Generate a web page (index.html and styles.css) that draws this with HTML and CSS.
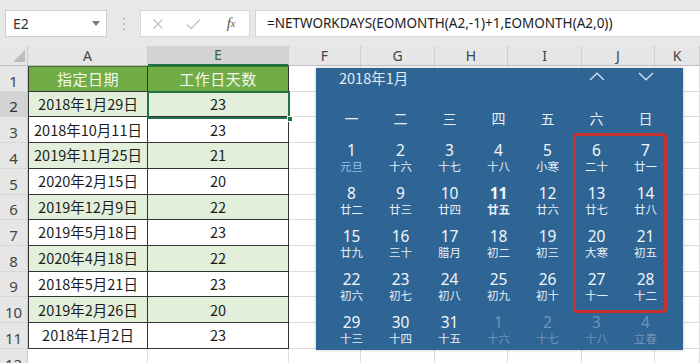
FILE: index.html
```html
<!DOCTYPE html>
<html lang="zh-CN">
<head>
<meta charset="utf-8">
<title>Excel NETWORKDAYS</title>
<link rel="stylesheet" href="styles.css">
</head>
<body>
<div class="toolbar">
  <div class="namebox">
    <span class="ref">E2</span>
    <svg class="dd" width="8" height="5" viewBox="0 0 8 5"><polygon points="0,0 8,0 4,5" fill="#7a7a7a"/></svg>
  </div>
  <div class="grip">
    <svg width="4" height="14" viewBox="0 0 4 14"><circle cx="2" cy="2" r="1.1" fill="#b5b5b5"/><circle cx="2" cy="7" r="1.1" fill="#b5b5b5"/><circle cx="2" cy="12" r="1.1" fill="#b5b5b5"/></svg>
  </div>
  <div class="fnbox">
    <span class="fb-btn"><svg width="12" height="12" viewBox="0 0 12 12"><path d="M1.5 1.5 L10.5 10.5 M10.5 1.5 L1.5 10.5" stroke="#c2c2c2" stroke-width="1.3" fill="none"/></svg></span>
    <span class="fb-btn"><svg width="15" height="12" viewBox="0 0 15 12"><path d="M1 6.5 L5.2 10.5 L14 1.5" stroke="#c2c2c2" stroke-width="1.3" fill="none"/></svg></span>
    <span class="fb-btn fx"><i>f</i><sub>x</sub></span>
  </div>
  <div class="formula">=NETWORKDAYS(EOMONTH(A2,-1)+1,EOMONTH(A2,0))</div>
</div>

<div class="sheet">
  <div class="row colhdr">
    <div class="corner"><svg width="12" height="12" viewBox="0 0 12 12"><polygon points="12,0 12,12 0,12" fill="#bdbdbd"/></svg></div>
    <div class="ch">A</div><div class="ch sel">E</div><div class="ch">F</div><div class="ch">G</div><div class="ch">H</div><div class="ch">I</div><div class="ch">J</div><div class="ch">K</div>
  </div>

  <div class="row"><div class="rh">1</div><div class="t th first">指定日期</div><div class="t th">工作日天数</div><div class="c"></div><div class="c"></div><div class="c"></div><div class="c"></div><div class="c"></div><div class="c"></div></div>
  <div class="row"><div class="rh sel">2</div><div class="t g first">2018年1月29日</div><div class="t g">23</div><div class="c"></div><div class="c"></div><div class="c"></div><div class="c"></div><div class="c"></div><div class="c"></div></div>
  <div class="row"><div class="rh">3</div><div class="t first">2018年10月11日</div><div class="t">23</div><div class="c"></div><div class="c"></div><div class="c"></div><div class="c"></div><div class="c"></div><div class="c"></div></div>
  <div class="row"><div class="rh">4</div><div class="t g first">2019年11月25日</div><div class="t g">21</div><div class="c"></div><div class="c"></div><div class="c"></div><div class="c"></div><div class="c"></div><div class="c"></div></div>
  <div class="row"><div class="rh">5</div><div class="t first">2020年2月15日</div><div class="t">20</div><div class="c"></div><div class="c"></div><div class="c"></div><div class="c"></div><div class="c"></div><div class="c"></div></div>
  <div class="row"><div class="rh">6</div><div class="t g first">2019年12月9日</div><div class="t g">22</div><div class="c"></div><div class="c"></div><div class="c"></div><div class="c"></div><div class="c"></div><div class="c"></div></div>
  <div class="row"><div class="rh">7</div><div class="t first">2019年5月18日</div><div class="t">23</div><div class="c"></div><div class="c"></div><div class="c"></div><div class="c"></div><div class="c"></div><div class="c"></div></div>
  <div class="row"><div class="rh">8</div><div class="t g first">2020年4月18日</div><div class="t g">22</div><div class="c"></div><div class="c"></div><div class="c"></div><div class="c"></div><div class="c"></div><div class="c"></div></div>
  <div class="row"><div class="rh">9</div><div class="t first">2018年5月21日</div><div class="t">23</div><div class="c"></div><div class="c"></div><div class="c"></div><div class="c"></div><div class="c"></div><div class="c"></div></div>
  <div class="row"><div class="rh">10</div><div class="t g first">2019年2月26日</div><div class="t g">20</div><div class="c"></div><div class="c"></div><div class="c"></div><div class="c"></div><div class="c"></div><div class="c"></div></div>
  <div class="row"><div class="rh">11</div><div class="t first">2018年1月2日</div><div class="t">23</div><div class="c"></div><div class="c"></div><div class="c"></div><div class="c"></div><div class="c"></div><div class="c"></div></div>
  <div class="row"><div class="rh">12</div><div class="c"></div><div class="c"></div><div class="c"></div><div class="c"></div><div class="c"></div><div class="c"></div><div class="c"></div><div class="c"></div></div>

  <div class="selection"><span class="handle"></span></div>

  <div class="calendar">
    <div class="cal-head">
      <div class="cal-title">2018年1月</div>
      <div class="chev"><svg width="16" height="9" viewBox="0 0 16 9"><path d="M1 8 L8 1.2 L15 8" stroke="#d5e1ec" stroke-width="1.3" fill="none"/></svg></div>
      <div class="chev"><svg width="16" height="9" viewBox="0 0 16 9"><path d="M1 1 L8 7.8 L15 1" stroke="#d5e1ec" stroke-width="1.3" fill="none"/></svg></div>
    </div>
    <div class="cal-week">
      <span>一</span><span>二</span><span>三</span><span>四</span><span>五</span><span>六</span><span>日</span>
    </div>
    <div class="cal-days">
      <div class="day"><b>1</b><small class="fest">元旦</small></div>
      <div class="day"><b>2</b><small>十六</small></div>
      <div class="day"><b>3</b><small>十七</small></div>
      <div class="day"><b>4</b><small>十八</small></div>
      <div class="day"><b>5</b><small>小寒</small></div>
      <div class="day"><b>6</b><small>二十</small></div>
      <div class="day"><b>7</b><small>廿一</small></div>

      <div class="day"><b>8</b><small>廿二</small></div>
      <div class="day"><b>9</b><small>廿三</small></div>
      <div class="day"><b>10</b><small>廿四</small></div>
      <div class="day today"><b>11</b><small>廿五</small></div>
      <div class="day"><b>12</b><small>廿六</small></div>
      <div class="day"><b>13</b><small>廿七</small></div>
      <div class="day"><b>14</b><small>廿八</small></div>

      <div class="day"><b>15</b><small>廿九</small></div>
      <div class="day"><b>16</b><small>三十</small></div>
      <div class="day"><b>17</b><small>腊月</small></div>
      <div class="day"><b>18</b><small>初二</small></div>
      <div class="day"><b>19</b><small>初三</small></div>
      <div class="day"><b>20</b><small>大寒</small></div>
      <div class="day"><b>21</b><small>初五</small></div>

      <div class="day"><b>22</b><small>初六</small></div>
      <div class="day"><b>23</b><small>初七</small></div>
      <div class="day"><b>24</b><small>初八</small></div>
      <div class="day"><b>25</b><small>初九</small></div>
      <div class="day"><b>26</b><small>初十</small></div>
      <div class="day"><b>27</b><small>十一</small></div>
      <div class="day"><b>28</b><small>十二</small></div>

      <div class="day"><b>29</b><small>十三</small></div>
      <div class="day"><b>30</b><small>十四</small></div>
      <div class="day"><b>31</b><small>十五</small></div>
      <div class="day dim"><b>1</b><small>十六</small></div>
      <div class="day dim"><b>2</b><small>十七</small></div>
      <div class="day dim"><b>3</b><small>十八</small></div>
      <div class="day dim"><b>4</b><small>立春</small></div>
    </div>
    <div class="weekend-mark"></div>
  </div>
</div>
</body>
</html>
```

FILE: styles.css
```css
* { box-sizing: border-box; }
html, body { margin: 0; padding: 0; }
body {
  width: 700px;
  height: 363px;
  overflow: hidden;
  background: #ffffff;
  font-family: "Noto Sans", "Noto Sans CJK SC", sans-serif;
  color: #222;
}

/* ---------- toolbar ---------- */
.toolbar {
  height: 46px;
  background: #e8e8e8;
  display: flex;
  align-items: flex-start;
  padding: 10px 0 0 5px;
}
.namebox {
  width: 102px;
  height: 27px;
  background: #fff;
  border: 1px solid #d0d0d0;
  display: flex;
  align-items: center;
  justify-content: space-between;
  padding: 0 6px 0 7px;
  font-size: 14px;
  color: #333;
}
.grip {
  width: 33px;
  display: flex;
  justify-content: center;
  padding-top: 7px;
}
.fnbox {
  width: 110px;
  height: 27px;
  background: #fff;
  border: 1px solid #d6d6d6;
  display: grid;
  grid-template-columns: 34px 36px 40px;
  align-items: center;
  justify-items: center;
}
.fb-btn { display: flex; align-items: center; justify-content: center; }
.fx {
  font-family: "Liberation Serif", serif;
  font-size: 15px;
  color: #555;
}
.fx sub { font-size: 10px; font-style: italic; vertical-align: -2px; }
.formula {
  flex: 1;
  margin-left: 5px;
  height: 27px;
  background: #fff;
  border: 1px solid #d6d6d6;
  border-right: none;
  font-size: 13.5px;
  line-height: 25px;
  padding-left: 11px;
  color: #222;
  white-space: nowrap;
}

/* ---------- sheet ---------- */
.sheet { position: relative; height: 317px; }
.row {
  display: grid;
  grid-template-columns: 28px 120px 141px 72px 74px 73px 74px 73px 45px;
  height: 25.73px;
}
.row.colhdr { height: 20px; }
.corner {
  background: #e6e6e6;
  border-right: 1px solid #c8c8c8;
  border-bottom: 1px solid #c0c0c0;
  display: flex;
  align-items: flex-end;
  justify-content: flex-end;
  padding: 0 2px 3px 0;
}
.ch {
  background: #e6e6e6;
  border-right: 1px solid #cfcfcf;
  border-bottom: 1px solid #bfbfbf;
  font-size: 14px;
  color: #444;
  display: flex;
  align-items: center;
  justify-content: center;
  line-height: 1;
}
.ch.sel {
  background: #d3d3d3;
  border-bottom: 2px solid #217346;
  color: #3b5e47;
}
.rh {
  background: #e6e6e6;
  border-right: 1px solid #c8c8c8;
  border-bottom: 1px solid #d6d6d6;
  font-size: 15px;
  color: #444;
  display: flex;
  align-items: flex-end;
  justify-content: center;
  line-height: 1;
  padding-bottom: 2px;
}
.rh.sel { background: #d3d3d3; color: #333; }
.c {
  border-right: 1px solid #dcdcdc;
  border-bottom: 1px solid #dcdcdc;
}
.t {
  border-right: 1px solid #333;
  border-bottom: 1px solid #333;
  font-family: "Noto Sans CJK SC", sans-serif;
  font-size: 14.5px;
  color: #1c1c1c;
  display: flex;
  align-items: center;
  justify-content: center;
  white-space: nowrap;
  line-height: 1;
}
.t.first { border-left: 1px solid #333; }
.t.g { background: #e2efda; }
.t.th {
  background: #70ad47;
  color: #f4f8ef;
  font-size: 15px;
  letter-spacing: 0.5px;
  border-top: 1px solid #3f6e2a;
}

.selection {
  position: absolute;
  left: 147px;
  top: 44.7px;
  width: 143px;
  height: 28px;
  border: 2px solid #217346;
}
.handle {
  position: absolute;
  right: -5px;
  bottom: -5px;
  width: 6px;
  height: 6px;
  background: #217346;
  border: 1px solid #fff;
}

/* ---------- calendar ---------- */
.calendar {
  position: absolute;
  left: 316px;
  top: 22px;
  width: 367px;
  height: 282px;
  background: #2e6595;
  padding: 0 13px 0 11px;
  font-family: "Noto Sans CJK SC", sans-serif;
  color: #eef3f8;
  box-shadow: 0 0 3px rgba(0, 0, 0, 0.25);
}
.cal-head {
  height: 32px;
  display: grid;
  grid-template-columns: 245px 49px 49px;
  align-items: start;
}
.cal-title {
  font-size: 14.5px;
  line-height: 20px;
  padding-left: 12px;
  color: #e4ecf4;
}
.chev {
  display: flex;
  justify-content: center;
  padding-top: 4px;
}
.cal-week {
  height: 36px;
  display: grid;
  grid-template-columns: repeat(7, 49px);
  align-items: center;
  justify-items: center;
  font-size: 14px;
  color: #e6edf4;
}
.cal-days {
  display: grid;
  grid-template-columns: repeat(7, 49px);
  grid-auto-rows: 43px;
}
.day {
  display: flex;
  flex-direction: column;
  align-items: center;
  padding-top: 6px;
}
.day b {
  font-family: "Noto Sans", sans-serif;
  font-weight: 400;
  font-size: 15.5px;
  line-height: 17px;
  color: #f2f6fa;
}
.day small {
  font-size: 11.5px;
  line-height: 15px;
  color: #e8eef5;
}
.day small.fest { color: #8fc4ee; }
.day.today b { font-weight: 700; }
.day.today small { font-weight: 700; }
.day.dim b, .day.dim small { color: #6f93b6; }

.weekend-mark {
  position: absolute;
  left: 257px;
  top: 65px;
  width: 94px;
  height: 180px;
  border: 3px solid #c8312d;
  border-radius: 4px;
}
```
